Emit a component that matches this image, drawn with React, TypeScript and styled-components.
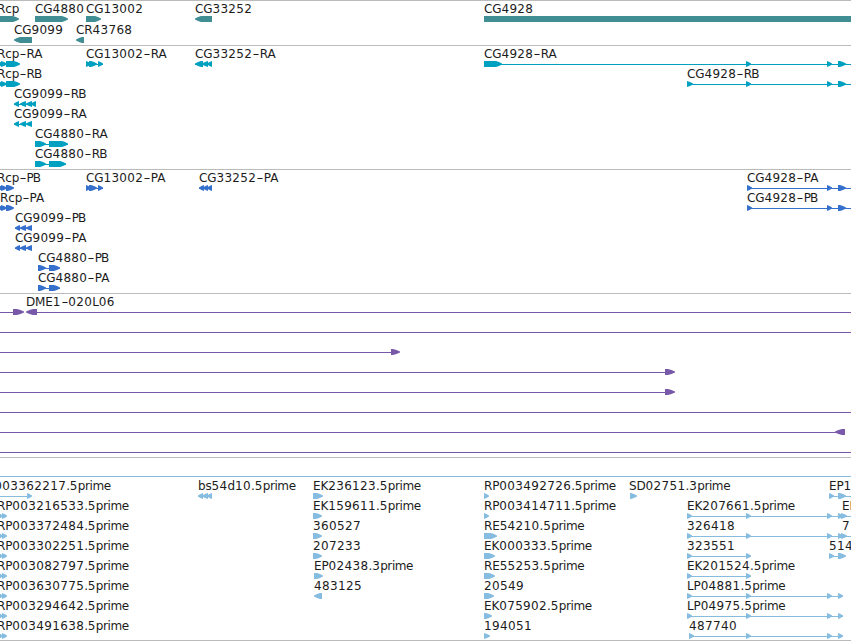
import styled, { createGlobalStyle } from "styled-components";

const GlobalStyle = createGlobalStyle`
    body{
        margin: 0;
        background-color: #fff;
        overflow: hidden;
    }
`
const Viewer = styled.div`
    width: 851px;
    height: 641px;
    overflow: hidden;
    display: flex;
    flex-direction: column;
    border-bottom: 1px solid #bbb;
    box-sizing: border-box;
`
const Track = styled.section<{ $color: string; $bottom: number }>`
    display: flex;
    flex-direction: column;
    border-top: 1px solid #bbb;
    padding-bottom: ${props => props.$bottom}px;
    color: ${props => props.$color};
`
const Row = styled.div<{ $height: number }>`
    position: relative;
    flex: none;
    height: ${props => props.$height}px;
    padding-top: 15px;
    box-sizing: border-box;
`
const Label = styled.span<{ $x: number }>`
    position: absolute;
    top: 1px;
    left: ${props => props.$x}px;
    line-height: 15px;
    font-family: "DejaVu Sans", sans-serif;
    font-size: 12px;
    letter-spacing: -0.15px;
    white-space: pre;
    color: #1c1c1c;
`
const Digits = styled.span`
    letter-spacing: 0.35px;
`
const Suffix = styled.span`
    letter-spacing: -0.4px;
`
const Isoform = styled.span`
    letter-spacing: -1px;
`
const Dash = styled.span`
    display: inline-block;
    width: 7.5px;
    text-align: center;
    transform: scaleX(1.6);
`
const Strip = styled.svg`
    display: block;
    width: 851px;
    height: 6px;
    fill: currentColor;
`

interface IFeature {
    name?: string;
    x?: number;
    line?: [number, number];
    parts?: [number, number][];
    reverse?: boolean;
}
interface ITrack {
    id: string;
    color: string;
    rowHeight: number;
    bottom: number;
    tip: number;
    rows: IFeature[][];
}

const END = 860;
const exons = (...starts: number[]): [number, number][] => starts.map(s => [s, s + 5]);
const est = (name: string, x: number, end: number): IFeature => ({ name, x, parts: [[x, end]] });
const leftEst = (name: string): IFeature => ({ name, x: -3, parts: [[-2, 3], [2, 7]] });

const tracks: ITrack[] = [
    {
        id: "gene", color: "#408e93", rowHeight: 21, bottom: 2, tip: 6,
        rows: [
            [
                { name: "Rcp", x: -3, parts: [[-10, 19]] },
                { name: "CG4880", x: 35, parts: [[35, 68]] },
                { name: "CG13002", x: 86, parts: [[86, 101]] },
                { name: "CG33252", x: 195, parts: [[195, 212]], reverse: true },
                { name: "CG4928", x: 484, parts: [[484, END]] },
            ],
            [
                { name: "CG9099", x: 14, parts: [[14, 32]], reverse: true },
                { name: "CR43768", x: 76, parts: [[76, 84]], reverse: true },
            ],
        ],
    },
    {
        id: "transcript", color: "#00a0c0", rowHeight: 20, bottom: 3, tip: 6,
        rows: [
            [
                { name: "Rcp-RA", x: -3, line: [0, 10], parts: [[-2, 3], [1, 7], [6, 20]] },
                { name: "CG13002-RA", x: 86, line: [86, 103], parts: [[86, 91], [89, 97], [98, 103]] },
                { name: "CG33252-RA", x: 195, line: [195, 212], parts: [[195, 203], [202, 208], [207, 212]], reverse: true },
                { name: "CG4928-RA", x: 484, line: [484, END], parts: [[484, 502], [746, 751], [827, 832], [838, 846]] },
            ],
            [
                { name: "Rcp-RB", x: -3, line: [0, 10], parts: [[-2, 3], [1, 7], [6, 20]] },
                { name: "CG4928-RB", x: 687, line: [687, END], parts: [[687, 693], [746, 751], [827, 832], [838, 846]] },
            ],
            [{ name: "CG9099-RB", x: 14, line: [14, 36], parts: [[14, 19], [20, 26], [26, 32], [31, 36]], reverse: true }],
            [{ name: "CG9099-RA", x: 14, line: [14, 32], parts: [[14, 19], [20, 26], [26, 32]], reverse: true }],
            [{ name: "CG4880-RA", x: 35, line: [35, 68], parts: [[35, 46], [49, 68]] }],
            [{ name: "CG4880-RB", x: 35, line: [35, 66], parts: [[35, 46], [49, 66]] }],
        ],
    },
    {
        id: "protein", color: "#3570cd", rowHeight: 20, bottom: 3, tip: 6,
        rows: [
            [
                { name: "Rcp-PB", x: -3, line: [0, 10], parts: [[-2, 3], [1, 7], [6, 14]] },
                { name: "CG13002-PA", x: 86, line: [86, 103], parts: [[86, 91], [89, 97], [98, 103]] },
                { name: "CG33252-PA", x: 199, line: [199, 212], parts: [[199, 204], [203, 208], [207, 212]], reverse: true },
                { name: "CG4928-PA", x: 747, line: [747, END], parts: [[747, 752], [827, 832], [838, 846]] },
            ],
            [
                { name: "Rcp-PA", x: 0, line: [0, 10], parts: [[-2, 3], [1, 7], [6, 14]] },
                { name: "CG4928-PB", x: 747, line: [747, END], parts: [[747, 752], [827, 832], [838, 846]] },
            ],
            [{ name: "CG9099-PB", x: 15, line: [15, 32], parts: [[15, 20], [20, 26], [26, 32]], reverse: true }],
            [{ name: "CG9099-PA", x: 15, line: [15, 32], parts: [[15, 20], [20, 26], [26, 32]], reverse: true }],
            [{ name: "CG4880-PB", x: 38, line: [38, 60], parts: [[38, 46], [49, 60]] }],
            [{ name: "CG4880-PA", x: 38, line: [38, 60], parts: [[38, 46], [49, 60]] }],
        ],
    },
    {
        id: "clone", color: "#7858a8", rowHeight: 20, bottom: 3, tip: 7,
        rows: [
            [
                { line: [0, 23], parts: [[13, 24]] },
                { name: "DME1-020L06", x: 26, line: [27, END], parts: [[26, 37]], reverse: true },
            ],
            [{ line: [0, END] }],
            [{ line: [0, 395], parts: [[391, 400]] }],
            [{ line: [0, 670], parts: [[665, 675]] }],
            [{ line: [0, 670], parts: [[665, 675]] }],
            [{ line: [0, END] }],
            [{ line: [0, 840], parts: [[835, 845]], reverse: true }],
            [{ line: [0, END] }],
        ],
    },
    {
        id: "est", color: "#86bce0", rowHeight: 20, bottom: 2, tip: 6,
        rows: [
            [{ line: [0, END] }],
            [
                { name: "RP003362217.5prime", x: -21, line: [0, 30], parts: exons(27) },
                { name: "bs54d10.5prime", x: 198, line: [198, 212], parts: [[198, 203], [202, 208], [207, 212]], reverse: true },
                est("EK236123.5prime", 313, 323),
                est("RP003492726.5prime", 484, 489),
                { name: "SD02751.3prime", x: 629, parts: [[630, 637]] },
                { name: "EP1", x: 829, line: [829, END], parts: [[829, 834], [838, 846]] },
            ],
            [
                leftEst("RP003216533.5prime"),
                est("EK159611.5prime", 313, 322),
                est("RP003414711.5prime", 484, 489),
                { name: "EK207661.5prime", x: 687, line: [687, 842], parts: exons(687, 746, 827, 838) },
                { name: "EK", x: 842, line: [842, END], parts: [[841, 847]] },
            ],
            [
                leftEst("RP003372484.5prime"),
                est("360527", 313, 322),
                est("RE54210.5prime", 484, 497),
                { name: "326418", x: 687, line: [687, 842], parts: exons(687, 746, 827, 838) },
                { name: "7", x: 842, line: [842, END], parts: [[841, 847]] },
            ],
            [
                leftEst("RP003302251.5prime"),
                est("207233", 313, 322),
                est("EK000333.5prime", 484, 495),
                { name: "323551", x: 687, line: [687, 751], parts: exons(687, 746) },
                { name: "514", x: 829, line: [829, 845], parts: [[829, 834], [838, 846]] },
            ],
            [
                leftEst("RP003082797.5prime"),
                est("EP02438.3prime", 314, 323),
                est("RE55253.5prime", 484, 495),
                { name: "EK201524.5prime", x: 687, line: [687, 751], parts: exons(687, 746) },
            ],
            [
                leftEst("RP003630775.5prime"),
                { name: "483125", x: 314, parts: [[314, 322]], reverse: true },
                est("20549", 484, 494),
                { name: "LP04881.5prime", x: 687, line: [687, 843], parts: exons(687, 746, 827, 838) },
            ],
            [
                leftEst("RP003294642.5prime"),
                est("EK075902.5prime", 484, 492),
                { name: "LP04975.5prime", x: 687, line: [687, 843], parts: exons(687, 746, 827, 838) },
            ],
            [
                leftEst("RP003491638.5prime"),
                est("194051", 484, 490),
                { name: "487740", x: 689, line: [689, 843], parts: exons(689, 746, 827, 838) },
            ],
        ],
    },
];

// block with a blunt pointed end in the strand direction
function arrowPoints(start: number, end: number, tip: number, reverse?: boolean) {
    const t = Math.min(tip, end - start);
    const h = t / 2;
    return reverse
        ? `${end},0 ${start + t},0 ${start + h},1 ${start},2.5 ${start},3.5 ${start + h},5 ${start + t},6 ${end},6`
        : `${start},0 ${end - t},0 ${end - h},1 ${end},2.5 ${end},3.5 ${end - h},5 ${end - t},6 ${start},6`;
}

function FeatureName({ name, x }: { name: string; x: number }) {
    return (
        <Label $x={x}>
            {name.split(/(\d+|-|prime|[RP]B$)/).map((part, i) => {
                if (part === "-") return <Dash key={i}>-</Dash>;
                if (part === "prime") return <Suffix key={i}>{part}</Suffix>;
                if (/^[RP]B$/.test(part)) return <Isoform key={i}>{part}</Isoform>;
                if (/^\d/.test(part)) return <Digits key={i}>{part}</Digits>;
                return part;
            })}
        </Label>
    )
}

function App() {
    return (
        <>
            <GlobalStyle />
            <Viewer>
                {tracks.map(track =>
                    <Track key={track.id} $color={track.color} $bottom={track.bottom}>
                        {track.rows.map((row, i) =>
                            <Row key={i} $height={track.rowHeight}>
                                {row.map(f => f.name ? <FeatureName key={f.name} name={f.name} x={f.x ?? 0} /> : null)}
                                <Strip viewBox="0 0 851 6">
                                    {row.map((f, n) =>
                                        <g key={n}>
                                            {f.line ? <rect x={f.line[0]} y={3} width={f.line[1] - f.line[0]} height={1} /> : null}
                                            {f.parts?.map(([start, end]) =>
                                                <polygon key={start} points={arrowPoints(start, end, track.tip, f.reverse)} />
                                            )}
                                        </g>
                                    )}
                                </Strip>
                            </Row>
                        )}
                    </Track>
                )}
            </Viewer>
        </>
    )
}

export default App;
